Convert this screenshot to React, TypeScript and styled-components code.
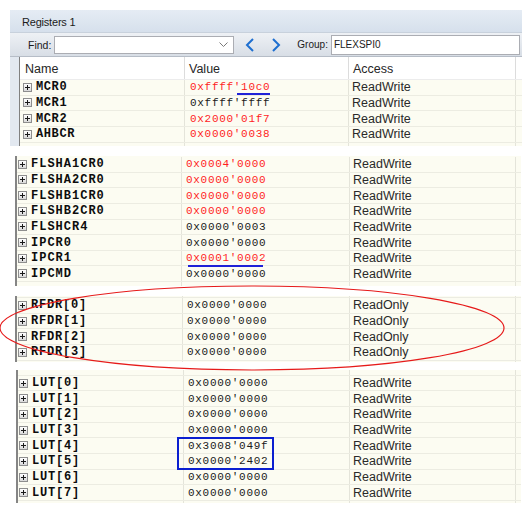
import React from "react";
import styled, { createGlobalStyle } from "styled-components";

type Reg = { name: string; value: string; access: string; changed?: boolean };

const GlobalStyle = createGlobalStyle`
  html, body { margin: 0; padding: 0; background: #fff; }
  body { font-family: "Liberation Sans", Arial, sans-serif; }
`;

const blank: Reg = { name: "", value: "", access: "" };

const mcr: Reg[] = [
    { name: "MCR0", value: "0xffff'10c0", access: "ReadWrite", changed: true },
    { name: "MCR1", value: "0xffff'ffff", access: "ReadWrite" },
    { name: "MCR2", value: "0x2000'01f7", access: "ReadWrite", changed: true },
    { name: "AHBCR", value: "0x0000'0038", access: "ReadWrite", changed: true },
    blank,
];

const flash: Reg[] = [
    { name: "FLSHA1CR0", value: "0x0004'0000", access: "ReadWrite", changed: true },
    { name: "FLSHA2CR0", value: "0x0000'0000", access: "ReadWrite", changed: true },
    { name: "FLSHB1CR0", value: "0x0000'0000", access: "ReadWrite", changed: true },
    { name: "FLSHB2CR0", value: "0x0000'0000", access: "ReadWrite", changed: true },
    { name: "FLSHCR4", value: "0x0000'0003", access: "ReadWrite" },
    { name: "IPCR0", value: "0x0000'0000", access: "ReadWrite" },
    { name: "IPCR1", value: "0x0001'0002", access: "ReadWrite", changed: true },
    { name: "IPCMD", value: "0x0000'0000", access: "ReadWrite" },
    blank,
];

const rfdr: Reg[] = [
    blank,
    ...[0, 1, 2, 3].map((i) => ({ name: `RFDR[${i}]`, value: "0x0000'0000", access: "ReadOnly" })),
    blank,
];

const lutValues = ["0x0000'0000", "0x0000'0000", "0x0000'0000", "0x0000'0000", "0x3008'049f", "0x0000'2402", "0x0000'0000", "0x0000'0000"];
const lut: Reg[] = [blank, ...lutValues.map((v, i) => ({ name: `LUT[${i}]`, value: v, access: "ReadWrite" })), blank];

const ChevronLeft = () => (
    <svg width="10" height="14" viewBox="0 0 10 14">
        <polyline points="8,1 2,7 8,13" fill="none" stroke="#1e6fd0" strokeWidth="2" />
    </svg>
);

const ChevronRight = () => (
    <svg width="10" height="14" viewBox="0 0 10 14">
        <polyline points="2,1 8,7 2,13" fill="none" stroke="#1e6fd0" strokeWidth="2" />
    </svg>
);

const DropArrow = () => (
    <svg width="9" height="6" viewBox="0 0 9 6">
        <polyline points="0.5,0.5 4.5,4.5 8.5,0.5" fill="none" stroke="#7a7a7a" strokeWidth="1" />
    </svg>
);

type RowsProps = { rows: Reg[]; cols: string; shift: number; nameSpacing: number; namePad?: number; valuePad?: number };

const RegisterRows = ({ rows, cols, shift, nameSpacing, namePad, valuePad }: RowsProps) => (
    <Rows $shift={shift}>
        {rows.map((r, i) => (
            <Row key={i} $cols={cols}>
                <NameCell $pad={namePad}>
                    {r.name && <Expander />}
                    <RegName $spacing={nameSpacing}>{r.name}</RegName>
                </NameCell>
                <ValueCell $changed={r.changed} $pad={valuePad}>
                    {r.value}
                </ValueCell>
                <AccessCell>{r.access}</AccessCell>
                <PadCell />
            </Row>
        ))}
    </Rows>
);

type SheetProps = RowsProps & { x: number; gap: number; height: number };

const RegisterSheet = ({ x, gap, height, ...rest }: SheetProps) => (
    <Sheet $x={x} $gap={gap} $height={height}>
        <RegisterRows {...rest} />
    </Sheet>
);

export default function App() {
    return (
        <Page>
            <GlobalStyle />
            <Window>
                <TitleBar>Registers 1</TitleBar>
                <Toolbar>
                    <Label>Find:</Label>
                    <Combo>
                        <DropArrow />
                    </Combo>
                    <NavButton $ml={11}>
                        <ChevronLeft />
                    </NavButton>
                    <NavButton $ml={16}>
                        <ChevronRight />
                    </NavButton>
                    <GroupLabel>Group:</GroupLabel>
                    <GroupInput>FLEXSPI0</GroupInput>
                </Toolbar>
                <GridArea>
                    <HeaderRow $cols="164px 164px 167px 1fr">
                        <HeaderCell>Name</HeaderCell>
                        <HeaderCell $divider>Value</HeaderCell>
                        <HeaderCell $divider>Access</HeaderCell>
                        <HeaderCell $divider />
                    </HeaderRow>
                    <Viewport>
                        <RegisterRows rows={mcr} cols="164px 164px 167px 1fr" shift={0} nameSpacing={0.6} namePad={3} valuePad={5} />
                    </Viewport>
                </GridArea>
            </Window>
            <RegisterSheet rows={flash} cols="164px 168px 166px 1fr" x={15} gap={10} height={130} shift={-1} nameSpacing={1} />
            <RegisterSheet rows={rfdr} cols="165px 167px 166px 1fr" x={15} gap={10} height={66} shift={13.6} nameSpacing={0.8} />
            <RegisterSheet rows={lut} cols="165px 166px 166px 1fr" x={16} gap={8} height={133} shift={9.8} nameSpacing={0.8} />
            <Overlay width="532" height="514" viewBox="0 0 532 514">
                <line x1="237" y1="94" x2="270" y2="94" stroke="#1f22d8" strokeWidth="2" />
                <line x1="188" y1="266" x2="263" y2="266" stroke="#1f22d8" strokeWidth="2" />
                <ellipse cx="252" cy="328" rx="252" ry="42" fill="none" stroke="#e61a1a" strokeWidth="1.2" />
                <rect x="178" y="438" width="95" height="31" fill="none" stroke="#0b1fd0" strokeWidth="2" />
            </Overlay>
        </Page>
    );
}

const Page = styled.div`
    position: relative;
    width: 532px;
    height: 514px;
    overflow: hidden;
    display: flex;
    flex-direction: column;
    background: #fff;
`;

const Window = styled.div`
    margin: 10px 0 0 10px;
    width: 512px;
    background: #e2e8f0;
    border-top-left-radius: 3px;
    display: flex;
    flex-direction: column;
`;

const TitleBar = styled.div`
    height: 23px;
    box-sizing: border-box;
    display: flex;
    align-items: center;
    padding: 2px 0 0 12px;
    font-size: 11px;
    letter-spacing: -0.2px;
    color: #1b1b1b;
    background: linear-gradient(#e5ecf4, #d6e0ec);
    border-bottom: 1px solid #c8d1dc;
`;

const Toolbar = styled.div`
    height: 24px;
    box-sizing: border-box;
    display: flex;
    align-items: center;
    padding-left: 18px;
    background: linear-gradient(#eef1f5, #d8dee6);
    border-bottom: 1px solid #b6bdc7;
`;

const Label = styled.span`
    font-size: 10.5px;
    color: #1b1b1b;
    margin-right: 3px;
`;

const GroupLabel = styled(Label)`
    margin-left: 16px;
    font-size: 10px;
`;

const Combo = styled.div`
    width: 180px;
    height: 18px;
    box-sizing: border-box;
    background: #fff;
    border: 1px solid #abadb3;
    display: flex;
    align-items: center;
    justify-content: flex-end;
    padding-right: 5px;
`;

const NavButton = styled.div<{ $ml: number }>`
    margin-left: ${(p) => p.$ml}px;
    width: 10px;
    height: 14px;
    display: flex;
`;

const GroupInput = styled.div`
    flex: 1;
    height: 20px;
    margin-right: 2px;
    box-sizing: border-box;
    background: #fff;
    border: 1px solid #abadb3;
    display: flex;
    align-items: center;
    padding-left: 2px;
    font-size: 10px;
    color: #1b1b1b;
`;

const GridArea = styled.div`
    margin-left: 9px;
    width: 502px;
    border-left: 1px solid #808080;
    background: #fff;
`;

const HeaderRow = styled.div<{ $cols: string }>`
    display: grid;
    grid-template-columns: ${(p) => p.$cols};
    height: 23px;
    box-sizing: border-box;
    border-bottom: 1px solid #ececec;
`;

const HeaderCell = styled.div<{ $divider?: boolean }>`
    display: flex;
    align-items: center;
    padding: 2px 0 0 ${(p) => (p.$divider ? 4 : 5)}px;
    font-size: 12.5px;
    color: #262626;
    border-left: ${(p) => (p.$divider ? "1px solid #dcdcdc" : "none")};
`;

const Viewport = styled.div`
    height: 66px;
    overflow: hidden;
    background: #fcfcf2;
`;

const Sheet = styled.div<{ $x: number; $gap: number; $height: number }>`
    margin-left: ${(p) => p.$x}px;
    margin-top: ${(p) => p.$gap}px;
    width: ${(p) => 521 - p.$x}px;
    height: ${(p) => p.$height}px;
    flex-shrink: 0;
    box-sizing: border-box;
    overflow: hidden;
    border-left: 2px solid #858585;
    background: #fcfcf2;
`;

const Rows = styled.div<{ $shift: number }>`
    margin-top: ${(p) => -p.$shift}px;
`;

const Row = styled.div<{ $cols: string }>`
    display: grid;
    grid-template-columns: ${(p) => p.$cols};
    height: 15.65px;
    box-sizing: border-box;
    border-bottom: 1px solid #ecece2;
`;

const NameCell = styled.div<{ $pad?: number }>`
    display: flex;
    align-items: center;
    gap: 4px;
    padding-left: ${(p) => p.$pad ?? 1}px;
    overflow: hidden;
`;

const Expander = styled.span`
    position: relative;
    flex-shrink: 0;
    width: 9px;
    height: 9px;
    box-sizing: border-box;
    border: 1px solid #8e8e8e;
    background: linear-gradient(#ffffff, #d9d9d9);

    &::before,
    &::after {
        content: "";
        position: absolute;
        background: #1a1a1a;
    }
    &::before {
        left: 1px;
        right: 1px;
        top: 3px;
        height: 1px;
    }
    &::after {
        top: 1px;
        bottom: 1px;
        left: 3px;
        width: 1px;
    }
`;

const RegName = styled.span<{ $spacing: number }>`
    font-family: "Liberation Mono", "DejaVu Sans Mono", monospace;
    font-weight: 700;
    font-size: 12px;
    letter-spacing: ${(p) => p.$spacing}px;
    color: #0d0d0d;
    white-space: nowrap;
`;

const ValueCell = styled.div<{ $changed?: boolean; $pad?: number }>`
    display: flex;
    align-items: center;
    padding-left: ${(p) => p.$pad ?? 4}px;
    border-left: 1px solid #e4e4da;
    font-family: "Liberation Mono", "DejaVu Sans Mono", monospace;
    font-size: 11px;
    letter-spacing: 0.7px;
    color: ${(p) => (p.$changed ? "#ff1e1e" : "#202020")};
    white-space: nowrap;
`;

const AccessCell = styled.div`
    display: flex;
    align-items: center;
    padding-left: 3px;
    border-left: 1px solid #e4e4da;
    font-size: 12.5px;
    color: #2a2a2a;
    white-space: nowrap;
`;

const PadCell = styled.div`
    border-left: 1px solid #e4e4da;
`;

const Overlay = styled.svg`
    position: absolute;
    top: 0;
    left: 0;
    pointer-events: none;
`;
